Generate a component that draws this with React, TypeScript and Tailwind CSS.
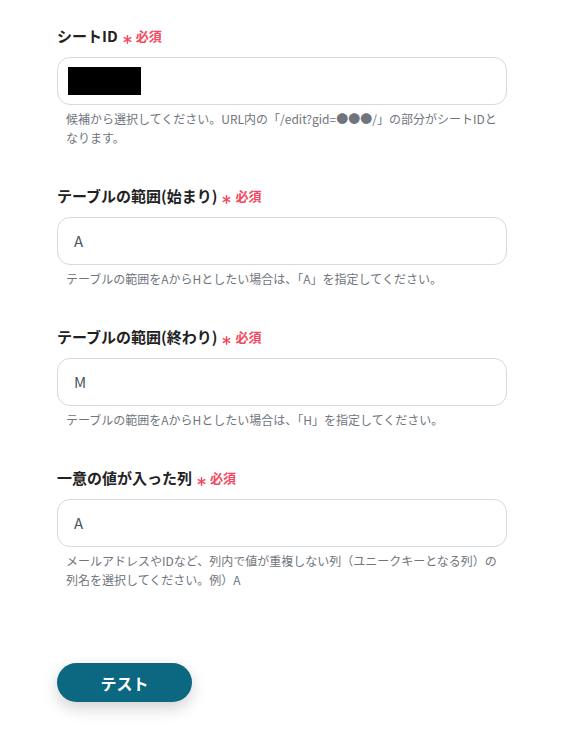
import React from "react";

const font = { fontFamily: '"Noto Sans CJK JP", "Noto Sans", sans-serif' };

function Star() {
  return (
    <svg width="9" height="9" viewBox="0 0 10 10" className="relative top-[3px]">
      <g stroke="#f5485f" strokeWidth="1.6" strokeLinecap="round">
        <line x1="5" y1="0.8" x2="5" y2="9.2" />
        <line x1="1.4" y1="2.9" x2="8.6" y2="7.1" />
        <line x1="1.4" y1="7.1" x2="8.6" y2="2.9" />
      </g>
    </svg>
  );
}

function Field({
  label,
  value,
  help,
  masked,
}: {
  label: string;
  value?: string;
  help: React.ReactNode;
  masked?: boolean;
}) {
  return (
    <div className="flex flex-col">
      <div className="flex items-center h-[22px]">
        <span className="text-[15px] font-bold text-[#222222] leading-[22px]">{label}</span>
        <span className="ml-[5px] flex items-center">
          <Star />
        </span>
        <span className="ml-[4px] text-[13px] leading-[22px] text-[#f5485f] font-bold">必須</span>
      </div>
      <div className="mt-[10px] h-[48px] w-[450px] rounded-[13px] border border-[#d5d8de] bg-white flex items-center pl-[16px]">
        {masked ? (
          <div className="w-[73px] h-[28px] bg-black -ml-[6px]" />
        ) : (
          <span className="text-[15px] text-[#4b5563]">{value}</span>
        )}
      </div>
      <div className="mt-[4px] pl-[9px] w-[450px] text-[12px] leading-[19px] text-[#70757d]">{help}</div>
    </div>
  );
}

export default function App() {
  return (
    <div className="w-[566px] h-[744px] bg-white" style={font}>
      <div className="pl-[57px] pt-[25px] flex flex-col gap-[38px]">
        <Field
          label="シートID"
          masked
          help="候補から選択してください。URL内の「/edit?gid=●●●/」の部分がシートIDとなります。"
        />
        <Field
          label="テーブルの範囲(始まり)"
          value="A"
          help="テーブルの範囲をAからHとしたい場合は、「A」を指定してください。"
        />
        <Field
          label="テーブルの範囲(終わり)"
          value="M"
          help="テーブルの範囲をAからHとしたい場合は、「H」を指定してください。"
        />
        <Field
          label="一意の値が入った列"
          value="A"
          help="メールアドレスやIDなど、列内で値が重複しない列（ユニークキーとなる列）の列名を選択してください。例）A"
        />
      </div>
      <div className="pl-[57px] mt-[74px]">
        <button className="w-[135px] h-[39px] rounded-full bg-[#0b6880] text-white text-[16px] font-bold shadow-[0_6px_16px_rgba(0,0,0,0.18)]">
          テスト
        </button>
      </div>
    </div>
  );
}
